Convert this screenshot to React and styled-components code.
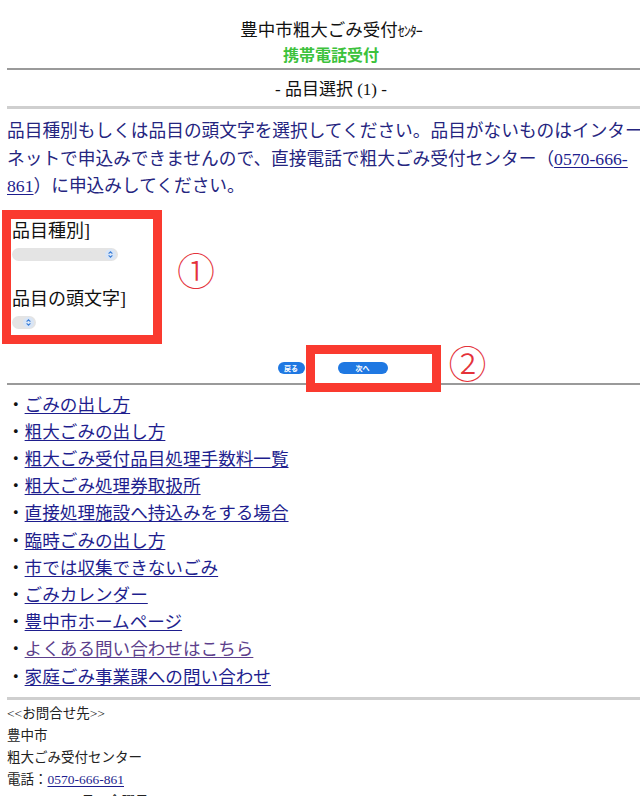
import React from "react";
import styled, { createGlobalStyle } from "styled-components";

const GlobalStyle = createGlobalStyle`
  html, body {
    margin: 0;
    padding: 0;
    background: #fff;
    overflow-x: hidden;
  }
  body {
    font-family: "Liberation Serif", "Noto Sans CJK JP", serif;
    color: #111;
  }
`;

const Page = styled.div`
  width: 648px;
  padding-left: 7px;
`;

const Header = styled.header`
  padding-top: 18px;
  text-align: center;
`;

const SiteTitle = styled.div`
  font-size: 17.5px;
  line-height: 24px;
`;

const HalfKana = styled.span`
  font-size: 14px;
  letter-spacing: -1px;
`;

const SubTitle = styled.div`
  font-family: "Noto Sans CJK JP", sans-serif;
  font-weight: 700;
  font-size: 16px;
  line-height: 20px;
  color: #3cc23c;
  margin-bottom: 4px;
`;

const Rule = styled.div`
  height: ${(p) => (p.light ? "3px" : "2px")};
  background: ${(p) => (p.light ? "#cfcfcf" : "#9a9a9a")};
`;

const SectionTitle = styled.div`
  text-align: center;
  font-size: 17px;
  line-height: 33px;
  padding-top: 3px;
`;

const Lead = styled.p`
  margin: 9px 0 0;
  padding-right: 12px;
  font-size: 17.7px;
  line-height: 27.5px;
  color: #25257f;
`;

const Link = styled.a`
  color: ${(p) => (p.visited ? "#5d3f8c" : "#1e1e8e")};
  text-decoration: underline;
  text-underline-offset: 2px;
`;

const Form = styled.section`
  position: relative;
  margin-top: 9px;
  padding: 9px 0 15px 5px;
`;

const FieldLabel = styled.div`
  font-size: 18px;
  line-height: 24px;
  margin-top: ${(p) => p.gap || "0px"};
`;

const Select = styled.div`
  display: flex;
  align-items: center;
  justify-content: flex-end;
  box-sizing: border-box;
  width: ${(p) => p.w};
  height: 13px;
  margin-top: ${(p) => p.gap || "5px"};
  padding-right: 2px;
  border-radius: 7px;
  background: #e4e4e4;
`;

const Mark = styled.div`
  position: absolute;
  border: 9px solid #fa3a2f;
  box-sizing: border-box;
  left: ${(p) => p.x};
  top: ${(p) => p.y};
  width: ${(p) => p.w};
  height: ${(p) => p.h};
  pointer-events: none;
`;

const Circled = styled.span`
  position: absolute;
  left: ${(p) => p.x};
  top: ${(p) => p.y};
  font-family: "Noto Sans CJK JP", sans-serif;
  font-weight: 300;
  font-size: 38px;
  line-height: 38px;
  color: #e4323a;
`;

const ButtonRow = styled.div`
  display: flex;
  justify-content: center;
  gap: 33px;
  margin-top: 18px;
  margin-bottom: 9px;
  padding-left: 3px;
`;

const Anchor = styled.div`
  position: relative;
`;

const Button = styled.button`
  display: block;
  height: 12px;
  width: ${(p) => p.w};
  padding: 0;
  border: none;
  border-radius: 6px;
  background: #1f78e2;
  color: #fff;
  font-family: "Noto Sans CJK JP", sans-serif;
  font-weight: 700;
  font-size: 7px;
  line-height: 12px;
`;

const LinkList = styled.ul`
  list-style: none;
  margin: 7px 0 6px;
  padding: 0;
`;

const LinkItem = styled.li`
  font-size: 17.6px;
  line-height: 27.2px;
  &::before {
    content: "・";
    color: #111;
  }
`;

const Footer = styled.footer`
  margin-top: 3px;
  font-size: 13.5px;
  line-height: 22px;
  color: #222;
`;

const Indent = styled.span`
  padding-left: 74px;
`;

function Spinner() {
  return (
    <svg width="11" height="11" viewBox="0 0 11 11">
      <circle cx="5.5" cy="5.5" r="5.5" fill="#d9e5f5" />
      <path d="M3.6 4.6 L5.5 2.9 L7.4 4.6" fill="none" stroke="#3b7fd9" strokeWidth="1.2" />
      <path d="M3.6 6.4 L5.5 8.1 L7.4 6.4" fill="none" stroke="#3b7fd9" strokeWidth="1.2" />
    </svg>
  );
}

const links = [
  "ごみの出し方",
  "粗大ごみの出し方",
  "粗大ごみ受付品目処理手数料一覧",
  "粗大ごみ処理券取扱所",
  "直接処理施設へ持込みをする場合",
  "臨時ごみの出し方",
  "市では収集できないごみ",
  "ごみカレンダー",
  "豊中市ホームページ",
  "よくある問い合わせはこちら",
  "家庭ごみ事業課への問い合わせ",
];

export default function App() {
  return (
    <Page>
      <GlobalStyle />
      <Header>
        <SiteTitle>
          豊中市粗大ごみ受付<HalfKana>ｾﾝﾀｰ</HalfKana>
        </SiteTitle>
        <SubTitle>携帯電話受付</SubTitle>
      </Header>
      <Rule />
      <SectionTitle>- 品目選択 (1) -</SectionTitle>
      <Rule light />
      <Lead>
        品目種別もしくは品目の頭文字を選択してください。品目がないものはインターネットで申込みできませんので、直接電話で粗大ごみ受付センター（
        <Link href="#">0570-666-861</Link>）に申込みしてください。
      </Lead>

      <Form>
        <FieldLabel>品目種別]</FieldLabel>
        <Select w="106px">
          <Spinner />
        </Select>
        <FieldLabel gap="26px">品目の頭文字]</FieldLabel>
        <Select w="24px" gap="5px">
          <Spinner />
        </Select>
        <Mark x="-5px" y="0px" w="160px" h="134px" />
        <Circled x="170px" y="40px">①</Circled>
      </Form>

      <ButtonRow>
        <Button w="27px">戻る</Button>
        <Anchor>
          <Button w="50px">次へ</Button>
          <Mark x="-32px" y="-17px" w="135px" h="47px" />
          <Circled x="111px" y="-19px">②</Circled>
        </Anchor>
      </ButtonRow>
      <Rule />

      <LinkList>
        {links.map((t, i) => (
          <LinkItem key={t}>
            <Link href="#" visited={i === 9 ? 1 : 0}>
              {t}
            </Link>
          </LinkItem>
        ))}
      </LinkList>
      <Rule light />

      <Footer>
        <div>&lt;&lt;お問合せ先&gt;&gt;</div>
        <div>豊中市</div>
        <div>粗大ごみ受付センター</div>
        <div>
          電話：<Link href="#">0570-666-861</Link>
        </div>
        <div>
          <Indent>月～金曜日</Indent>
        </div>
      </Footer>
    </Page>
  );
}
